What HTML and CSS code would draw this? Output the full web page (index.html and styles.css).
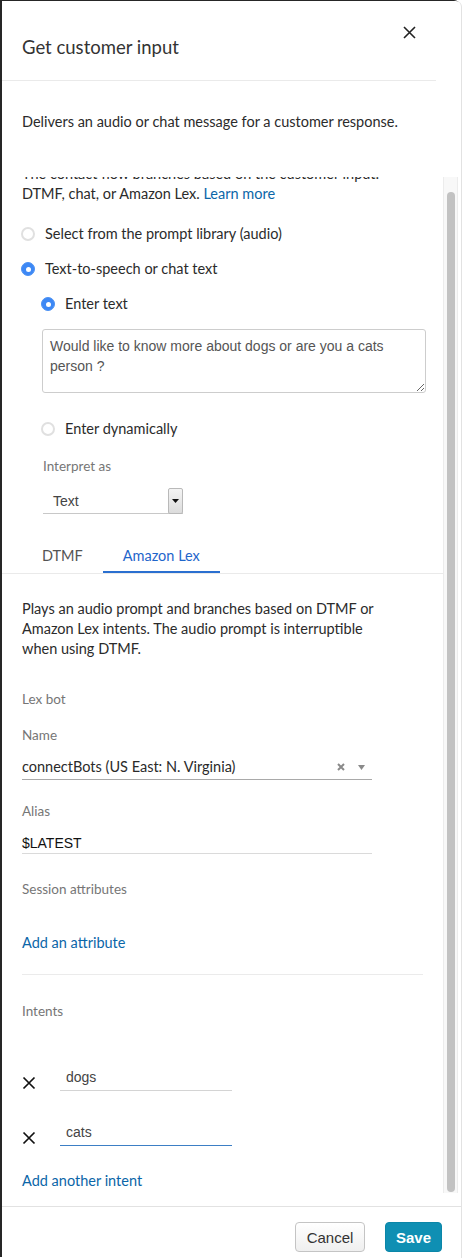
FILE: index.html
```html
<!DOCTYPE html>
<html>
<head>
<meta charset="utf-8">
<link rel="stylesheet" href="styles.css">
</head>
<body>
<div class="panel">
  <header class="hdr">
    <h1 class="title">Get customer input</h1>
    <button class="close" aria-label="Close">
      <svg width="13" height="13" viewBox="0 0 13 13"><path d="M1 1L12 12M12 1L1 12" stroke="#222" stroke-width="1.6" fill="none"/></svg>
    </button>
  </header>
  <div class="desc">Delivers an audio or chat message for a customer response.</div>
  <div class="scroll">
    <div class="content">
      <p class="intro">The contact flow branches based on the customer input: DTMF, chat, or Amazon Lex. <a class="link" href="#">Learn more</a></p>
      <div class="radio-row first"><span class="radio"></span><span>Select from the prompt library (audio)</span></div>
      <div class="radio-row"><span class="radio on"></span><span>Text-to-speech or chat text</span></div>
      <div class="radio-row nested"><span class="radio on"></span><span>Enter text</span></div>
      <textarea class="ta">Would like to know more about dogs or are you a cats person ?</textarea>
      <div class="radio-row nested gap-big"><span class="radio"></span><span>Enter dynamically</span></div>
      <div class="label interp">Interpret as</div>
      <div class="select">
        <span class="select-val">Text</span>
        <span class="select-btn"><svg width="7" height="4" viewBox="0 0 7 4"><path d="M0 0H7L3.5 4Z" fill="#111"/></svg></span>
      </div>
      <div class="tabs">
        <div class="tab">DTMF</div>
        <div class="tab active">Amazon Lex</div>
      </div>
      <div class="lex">
        <p class="plays">Plays an audio prompt and branches based on DTMF or Amazon Lex intents. The audio prompt is interruptible when using DTMF.</p>
        <div class="label lexbot">Lex bot</div>
        <div class="label name">Name</div>
        <div class="field name-field">
          <span class="field-val">connectBots (US East: N. Virginia)</span>
          <span class="field-icons">
            <svg width="8" height="8" viewBox="0 0 8 8"><path d="M1 1L7 7M7 1L1 7" stroke="#8a8a8a" stroke-width="2" fill="none"/></svg>
            <svg width="7" height="5" viewBox="0 0 7 5"><path d="M0 0H7L3.5 5Z" fill="#8a8a8a"/></svg>
          </span>
        </div>
        <div class="label alias">Alias</div>
        <div class="field alias-field"><span class="mono-val">$LATEST</span></div>
        <div class="label session">Session attributes</div>
        <a class="link add-attr" href="#">Add an attribute</a>
        <div class="divider"></div>
        <div class="label intents">Intents</div>
        <div class="intent first-intent">
          <svg class="x" width="14" height="14" viewBox="0 0 14 14"><path d="M1.5 1.5L12.5 12.5M12.5 1.5L1.5 12.5" stroke="#111" stroke-width="1.7" fill="none"/></svg>
          <span class="intent-input">dogs</span>
        </div>
        <div class="intent second-intent">
          <svg class="x" width="14" height="14" viewBox="0 0 14 14"><path d="M1.5 1.5L12.5 12.5M12.5 1.5L1.5 12.5" stroke="#111" stroke-width="1.7" fill="none"/></svg>
          <span class="intent-input focus">cats</span>
        </div>
        <a class="link add-intent" href="#">Add another intent</a>
      </div>
    </div>
    <div class="scrollbar"><div class="thumb"></div></div>
  </div>
  <footer class="ftr">
    <button class="btn cancel">Cancel</button>
    <button class="btn save">Save</button>
  </footer>
</div>
</body>
</html>
```
FILE: styles.css
```css
* { box-sizing: border-box; }
html, body { margin: 0; padding: 0; }
body {
  background: #ffffff;
  width: 464px;
  height: 1258px;
  overflow: hidden;
  font-family: Lato, "Open Sans", sans-serif;
  color: #2b2b2b;
  font-size: 14.5px;
}
.panel {
  margin: 1px 0 0 2px;
  width: 460px;
  height: 1257px;
  background: #fff;
  border-right: 1px solid #e2e2e2;
  border-top-right-radius: 6px;
  box-shadow: -2px -1px 0 #262626;
  display: flex;
  flex-direction: column;
}
.hdr {
  height: 80px;
  margin-right: 25px;
  padding-left: 20px;
  border-bottom: 1px solid #eaeaea;
  display: flex;
  justify-content: space-between;
  align-items: flex-start;
  flex-shrink: 0;
}
.title {
  margin: 0;
  padding-top: 34px;
  font-size: 18.5px;
  line-height: 24px;
  font-weight: 400;
  color: #333;
}
.close {
  margin-top: 25px;
  margin-right: 20px;
  padding: 0;
  border: 0;
  background: none;
  width: 13px;
  height: 13px;
  display: flex;
}
.desc {
  height: 96px;
  padding: 31px 0 0 20px;
  line-height: 20px;
  flex-shrink: 0;
}
.scroll {
  height: 1016px;
  display: flex;
  flex-shrink: 0;
}
.content {
  flex: 1;
  overflow: hidden;
}
.scrollbar {
  width: 15px;
  margin-right: 3px;
  background: #f8f8f8;
  border-left: 1px solid #ececec;
  border-right: 1px solid #ececec;
  padding: 15px 2px 1px 3px;
}
.thumb {
  height: 100%;
  width: 8px;
  background: #c2c2c2;
  border-radius: 4px;
}
.intro {
  margin: -13px 0 0;
  padding: 0 40px 0 20px;
  line-height: 20px;
}
.link {
  color: #0b66a8;
  text-decoration: none;
}
.radio-row {
  display: flex;
  align-items: center;
  gap: 10px;
  height: 20px;
  line-height: 20px;
  margin-top: 15px;
  padding-left: 19px;
}
.radio-row.first { margin-top: 20px; }
.radio-row.nested { padding-left: 39px; }
.radio-row.gap-big { margin-top: 26px; }
.radio {
  width: 14px;
  height: 14px;
  border-radius: 50%;
  border: 2px solid #e0e0e0;
  background: #fff;
  flex-shrink: 0;
}
.radio.on {
  background: #3d88f5;
  border: 1px solid #4c92f4;
  display: flex;
  align-items: center;
  justify-content: center;
}
.radio.on::after {
  content: "";
  width: 5px;
  height: 5px;
  border-radius: 50%;
  background: #fff;
}
.ta {
  display: block;
  margin: 15px 0 0 40px;
  width: 384px;
  height: 64px;
  padding: 6px 7px;
  border: 1px solid #cdcdcd;
  border-radius: 3px;
  font-family: "Liberation Sans", Arial, sans-serif;
  font-size: 14px;
  line-height: 20px;
  color: #555;
  resize: vertical;
  outline: none;
}
.label {
  color: #767676;
  font-size: 13.5px;
  line-height: 20px;
}
.interp { margin-top: 17px; padding-left: 41px; }
.select {
  margin: 12px 0 0 41px;
  width: 140px;
  height: 26px;
  border-bottom: 1px solid #c8c8c8;
  display: flex;
  align-items: center;
  justify-content: space-between;
}
.select-val {
  padding-left: 10px;
  font-family: "Liberation Sans", Arial, sans-serif;
  font-size: 14px;
  color: #444;
}
.select-btn {
  width: 15px;
  height: 26px;
  border: 1px solid #b9b9b9;
  border-radius: 2px;
  background: linear-gradient(#f4f4f4, #dcdcdc);
  display: flex;
  align-items: center;
  justify-content: center;
}
.tabs {
  margin-top: 24px;
  padding-left: 20px;
  border-bottom: 1px solid #eaeaea;
  display: flex;
}
.tab {
  padding: 8px 20px 5px;
  line-height: 20px;
  border-bottom: 2px solid transparent;
  color: #545454;
}
.tab.active {
  color: #1f66cb;
  border-bottom-color: #2a6fd0;
}
.lex {
  padding: 0 20px;
  display: flex;
  flex-direction: column;
  align-items: flex-start;
}
.plays {
  margin: 25px 0 0;
  width: 372px;
  line-height: 20px;
}
.lexbot { margin-top: 30px; }
.name { margin-top: 16px; }
.field {
  width: 350px;
  display: flex;
  align-items: center;
  justify-content: space-between;
  line-height: 20px;
}
.name-field {
  margin-top: 12px;
  padding-bottom: 2px;
  border-bottom: 1px solid #a9a9a9;
  color: #2a2a2a;
}
.field-icons {
  display: flex;
  align-items: center;
  gap: 13px;
  padding-right: 7px;
}
.alias { margin-top: 21px; }
.alias-field {
  margin-top: 12px;
  border-bottom: 1px solid #dadada;
}
.mono-val {
  font-family: "Liberation Sans", Arial, sans-serif;
  font-size: 14px;
  color: #111;
}
.session { margin-top: 25px; }
.add-attr { margin-top: 34px; line-height: 20px; }
.divider {
  margin-top: 21px;
  width: 401px;
  height: 1px;
  background: #ebebeb;
}
.intents { margin-top: 26px; }
.intent {
  display: flex;
  align-items: flex-end;
  gap: 24px;
}
.first-intent { margin-top: 46px; }
.second-intent { margin-top: 31px; }
.x { margin-bottom: 1px; }
.intent-input {
  width: 172px;
  padding: 0 0 3px 6px;
  line-height: 20px;
  border-bottom: 1px solid #d4d4d4;
  font-family: "Liberation Sans", Arial, sans-serif;
  font-size: 14px;
  color: #444;
}
.intent-input.focus { border-bottom-color: #3d7fc5; }
.add-intent { margin-top: 25px; line-height: 20px; }
.ftr {
  margin-top: 13px;
  border-top: 1px solid #e2e2e2;
  padding: 15px 19px 0 0;
  display: flex;
  justify-content: flex-end;
  gap: 20px;
}
.btn {
  height: 30px;
  border-radius: 4px;
  font-family: "Liberation Sans", Arial, sans-serif;
  font-size: 15px;
  padding: 0;
}
.cancel {
  width: 70px;
  border: 1px solid #c4c4c4;
  background: linear-gradient(#ffffff, #efefef);
  color: #333;
}
.save {
  width: 57px;
  border: 1px solid #0b86a8;
  background: #0f8fb3;
  color: #fff;
  font-weight: 700;
}
```
